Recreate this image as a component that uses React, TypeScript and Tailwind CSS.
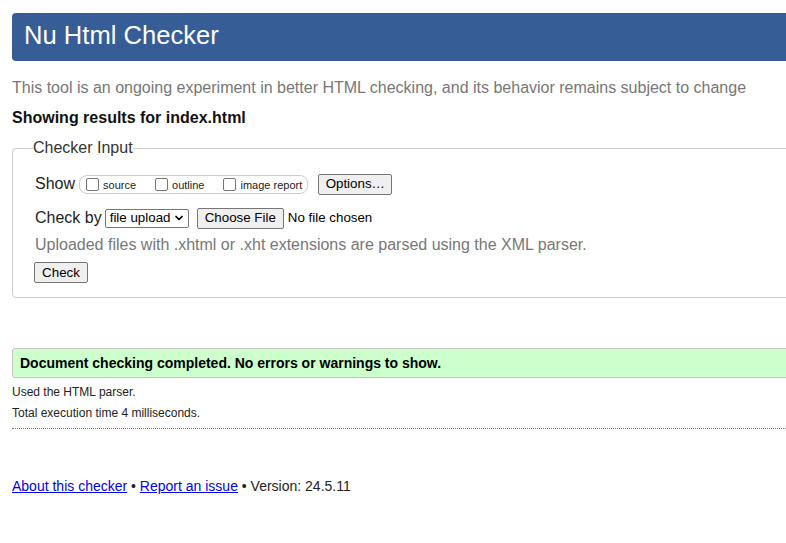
import { ChevronDown } from 'lucide-react';

function Checkbox({ label }: { label: string })
{
	return (
		<span className="flex items-center">
			<span className="w-[13px] h-[13px] rounded-[2px] border border-[#767676] bg-white" />
			<span className="ml-[4px] mt-[2px] text-[11px] leading-[13px] text-[#222]">{label}</span>
		</span>
	);
}

function NativeButton({ children, className = '' }: { children: React.ReactNode; className?: string })
{
	return (
		<span className={`inline-flex items-center justify-center whitespace-nowrap h-[21px] px-[7px] rounded-[2px] border border-[#767676] bg-[#efefef] text-[13.33px] text-black ${className}`}>
			{children}
		</span>
	);
}

export default function App()
{
	return (
		<div className="w-[786px] h-[543px] overflow-hidden bg-white font-['Liberation_Sans',Arial,sans-serif] text-[#222]">
			<div className="w-[1000px] pl-[12px] pt-[13px]">
				<header className="h-[48px] rounded-[4px] bg-[#365d95] flex items-center pl-[12px]">
					<h1 className="text-[25.6px] leading-none text-white -mt-[2px]">Nu Html Checker</h1>
				</header>

				<p className="mt-[18px] text-[16px] leading-[18px] text-[#777]">
					This tool is an ongoing experiment in better HTML checking, and its behavior remains subject to change
				</p>
				<p className="mt-[12px] text-[16px] leading-[18px] font-bold text-[#111]">Showing results for index.html</p>

				<fieldset className="mt-[12px] border border-[#ccc] rounded-[4px] px-[20px] pb-[13px]">
					<legend className="text-[16px] leading-[18px] text-[#333]">Checker Input</legend>

					<div className="mt-[16px] pl-[2px] flex items-center h-[22px]">
						<span className="text-[16px] leading-[18px]">Show</span>
						<span className="ml-[4px] h-[19px] flex items-center rounded-[8px] border border-[#ccc] pl-[6px] pr-[5px] gap-[19px]">
							<Checkbox label="source" />
							<Checkbox label="outline" />
							<Checkbox label="image report" />
						</span>
						<NativeButton className="ml-[10px] w-[74px]">Options…</NativeButton>
					</div>

					<div className="mt-[12px] pl-[2px] flex items-center h-[22px]">
						<span className="text-[16px] leading-[18px]">Check by</span>
						<span className="ml-[3px] h-[19px] w-[84px] flex items-center justify-between rounded-[2px] border border-[#767676] bg-white pl-[4px] pr-[3px] text-[13.33px] text-black">
							file upload
							<ChevronDown className="w-[12px] h-[12px]" strokeWidth={3.5} />
						</span>
						<NativeButton className="ml-[8px]">Choose File</NativeButton>
						<span className="ml-[4px] text-[13.33px] text-black">No file chosen</span>
					</div>

					<p className="mt-[7px] pl-[2px] text-[16px] leading-[18px] text-[#777]">
						Uploaded files with .xhtml or .xht extensions are parsed using the XML parser.
					</p>

					<div className="mt-[6px] pl-[1px]">
						<NativeButton className="w-[54px] h-[20px]">Check</NativeButton>
					</div>
				</fieldset>

				<div className="mt-[50px] h-[30px] rounded-[3px] border border-[#c4c4c4] bg-[#ccffcc] flex items-center pl-[7px]">
					<span className="text-[14px] font-bold text-black">Document checking completed. No errors or warnings to show.</span>
				</div>

				<p className="mt-[7px] text-[12px] leading-[14px]">Used the HTML parser.</p>
				<p className="mt-[7px] text-[12px] leading-[14px]">Total execution time 4 milliseconds.</p>
				<div className="mt-[8px] border-t border-dotted border-[#777]" />

				<p className="mt-[49px] text-[14px] leading-[16px]">
					<a href="#" className="text-[#0000ee] underline">About this checker</a>
					{' • '}
					<a href="#" className="text-[#0000ee] underline">Report an issue</a>
					{' • Version: 24.5.11'}
				</p>
			</div>
		</div>
	);
}
